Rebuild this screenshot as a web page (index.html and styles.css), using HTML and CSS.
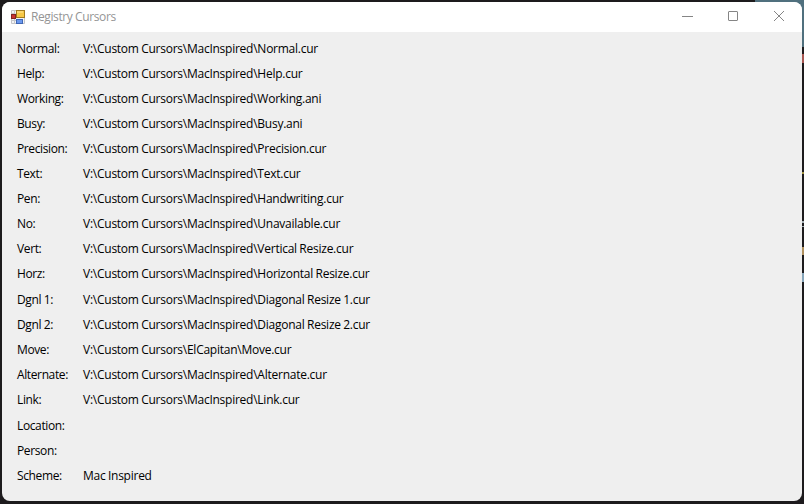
FILE: index.html
```
<!DOCTYPE html>
<html lang="en">
<head>
<meta charset="utf-8">
<title>Registry Cursors</title>
<link rel="stylesheet" href="styles.css">
</head>
<body>
<main class="window">
<header class="titlebar">
<svg class="app-icon" width="14" height="14" viewBox="0 0 14 14">
<path d="M.5.5h13v13H.5z" fill="#f4f4f5" stroke="#c4c5c8"/>
<path d="M.5 3.500h4M3.500 0v14M0 10.500h6" stroke="#c7c8cb" fill="none"/>
<rect x=".5" y="4.500" width="4" height="4" fill="#c93333" stroke="#842323"/>
<rect x="5.500" y=".5" width="8" height="7" fill="#f7c846" stroke="#a17a20"/>
<path d="M6 2h6" stroke="#ffe79b"/>
<rect x="5.500" y="9.500" width="6" height="4" fill="#6b98ed" stroke="#3f66b5"/>
</svg>
<h1 class="title">Registry Cursors</h1>
<div class="controls">
<svg width="46" height="30" viewBox="0 0 46 30"><path d="M18 14.500h11"/></svg>
<svg width="46" height="30" viewBox="0 0 46 30"><rect x="18.500" y="9.500" width="9" height="9" rx=".5"/></svg>
<svg width="46" height="30" viewBox="0 0 46 30"><path d="M18 9l10 10M28 9l-10 10"/></svg>
</div>
</header>
<dl class="list">
<dt>Normal:</dt><dd>V:\Custom Cursors\MacInspired\Normal.cur</dd>
<dt>Help:</dt><dd>V:\Custom Cursors\MacInspired\Help.cur</dd>
<dt>Working:</dt><dd>V:\Custom Cursors\MacInspired\Working.ani</dd>
<dt>Busy:</dt><dd>V:\Custom Cursors\MacInspired\Busy.ani</dd>
<dt>Precision:</dt><dd>V:\Custom Cursors\MacInspired\Precision.cur</dd>
<dt>Text:</dt><dd>V:\Custom Cursors\MacInspired\Text.cur</dd>
<dt>Pen:</dt><dd>V:\Custom Cursors\MacInspired\Handwriting.cur</dd>
<dt>No:</dt><dd>V:\Custom Cursors\MacInspired\Unavailable.cur</dd>
<dt>Vert:</dt><dd>V:\Custom Cursors\MacInspired\Vertical Resize.cur</dd>
<dt>Horz:</dt><dd>V:\Custom Cursors\MacInspired\Horizontal Resize.cur</dd>
<dt>Dgnl 1:</dt><dd>V:\Custom Cursors\MacInspired\Diagonal Resize 1.cur</dd>
<dt>Dgnl 2:</dt><dd>V:\Custom Cursors\MacInspired\Diagonal Resize 2.cur</dd>
<dt>Move:</dt><dd>V:\Custom Cursors\ElCapitan\Move.cur</dd>
<dt>Alternate:</dt><dd>V:\Custom Cursors\MacInspired\Alternate.cur</dd>
<dt>Link:</dt><dd>V:\Custom Cursors\MacInspired\Link.cur</dd>
<dt>Location:</dt><dd></dd>
<dt>Person:</dt><dd></dd>
<dt>Scheme:</dt><dd>Mac Inspired</dd>
</dl>
</main>
</body>
</html>
```
FILE: styles.css
```
* { box-sizing: border-box; }
html { background: #1d1b1d; }
body {
  margin: 0;
  height: 504px;
  padding: 2px 2px 3px;
  overflow: hidden;
  font-family: "Open Sans", "Noto Sans", sans-serif;
  font-size: 12px;
  background:
    linear-gradient(#50707e, #50707e) 755px 0 / 49px 47px no-repeat,
    linear-gradient(#a95752, #a95752) 802px 54px / 2px 9px no-repeat,
    linear-gradient(#a39443, #a39443) 802px 172px / 2px 2px no-repeat,
    linear-gradient(#a2adb3, #a2adb3) 802px 221px / 2px 2px no-repeat,
    linear-gradient(#a2adb3, #a2adb3) 802px 226px / 2px 1px no-repeat,
    linear-gradient(#b2925f, #b2925f) 802px 247px / 2px 8px no-repeat,
    linear-gradient(#86a5ba, #86a5ba) 802px 273px / 2px 9px no-repeat,
    #1d1b1d;
}
.window {
  height: 499px;
  border-radius: 8px;
  overflow: hidden;
  background: #efefef;
}
.titlebar {
  display: flex;
  align-items: center;
  height: 30px;
  padding-left: 9px;
  background: #fff;
}
.app-icon { flex: none; }
.title {
  margin: 0 0 0 6px;
  font-size: 12px;
  font-weight: 400;
  line-height: 30px;
  letter-spacing: -0.4px;
  color: #959595;
}
.controls { display: flex; margin-left: auto; }
.controls svg { fill: none; stroke: #858585; stroke-width: 1; }
.list {
  display: grid;
  grid-template-columns: 66px 1fr;
  grid-template-rows: repeat(9, 25px) 26px repeat(4, 25px) 26px repeat(3, 25px);
  margin: 0;
  padding: 4px 0 0 15px;
  line-height: 25px;
  color: #000;
}
dt, dd { margin: 0; white-space: nowrap; }
dt { letter-spacing: -0.38px; }
dd { letter-spacing: -0.25px; word-spacing: -0.4px; }
```
